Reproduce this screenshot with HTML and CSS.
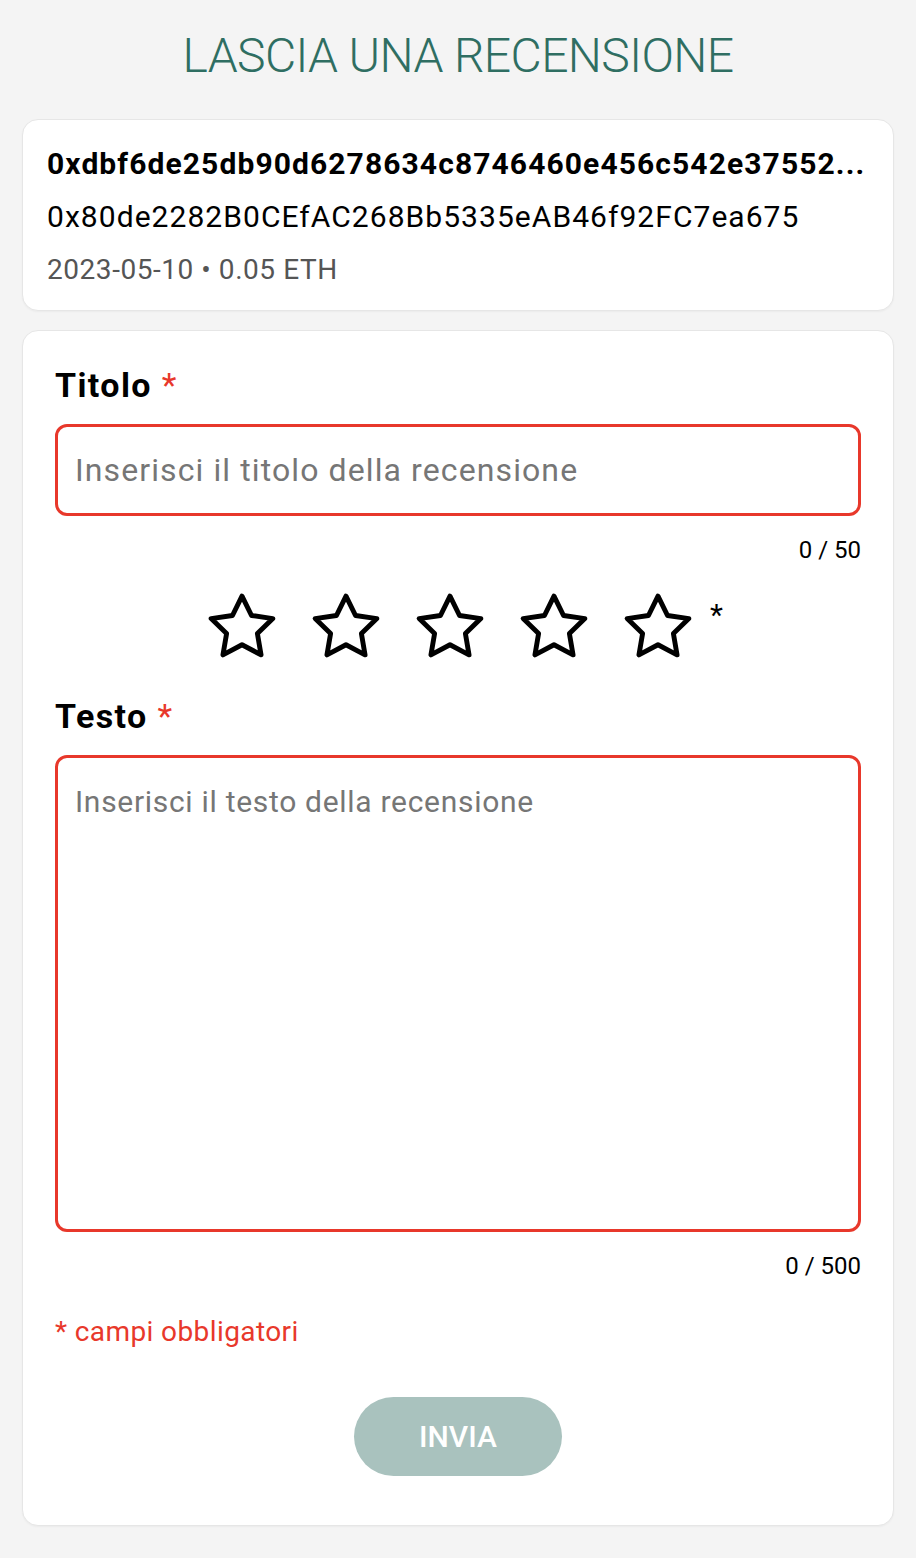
FILE: index.html
```html
<!DOCTYPE html>
<html lang="it">
<head>
<meta charset="utf-8">
<title>Lascia una recensione</title>
<link rel="stylesheet" href="styles.css">
</head>
<body>
<main class="page">
  <h1 class="page-title">LASCIA UNA RECENSIONE</h1>

  <section class="card tx-card">
    <div class="tx-hash">0xdbf6de25db90d6278634c8746460e456c542e37552...</div>
    <div class="tx-address">0x80de2282B0CEfAC268Bb5335eAB46f92FC7ea675</div>
    <div class="tx-meta">2023-05-10 • 0.05 ETH</div>
  </section>

  <form class="card review-card">
    <label class="field-label" for="titolo">Titolo <span class="req">*</span></label>
    <input class="text-input" id="titolo" type="text" placeholder="Inserisci il titolo della recensione">
    <div class="counter">0 / 50</div>

    <div class="stars">
      <svg class="star" viewBox="0 0 24 24"><polygon points="12 2 15.09 8.26 22 9.27 17 14.14 18.18 21.02 12 17.77 5.82 21.02 7 14.14 2 9.27 8.91 8.26 12 2"/></svg>
      <svg class="star" viewBox="0 0 24 24"><polygon points="12 2 15.09 8.26 22 9.27 17 14.14 18.18 21.02 12 17.77 5.82 21.02 7 14.14 2 9.27 8.91 8.26 12 2"/></svg>
      <svg class="star" viewBox="0 0 24 24"><polygon points="12 2 15.09 8.26 22 9.27 17 14.14 18.18 21.02 12 17.77 5.82 21.02 7 14.14 2 9.27 8.91 8.26 12 2"/></svg>
      <svg class="star" viewBox="0 0 24 24"><polygon points="12 2 15.09 8.26 22 9.27 17 14.14 18.18 21.02 12 17.77 5.82 21.02 7 14.14 2 9.27 8.91 8.26 12 2"/></svg>
      <svg class="star" viewBox="0 0 24 24"><polygon points="12 2 15.09 8.26 22 9.27 17 14.14 18.18 21.02 12 17.77 5.82 21.02 7 14.14 2 9.27 8.91 8.26 12 2"/></svg>
      <span class="stars-req">*</span>
    </div>

    <label class="field-label field-label-text" for="testo">Testo <span class="req">*</span></label>
    <textarea class="text-area" id="testo" placeholder="Inserisci il testo della recensione"></textarea>
    <div class="counter">0 / 500</div>

    <p class="required-note">* campi obbligatori</p>

    <div class="actions">
      <button class="submit" type="button" disabled>INVIA</button>
    </div>
  </form>
</main>
</body>
</html>
```

FILE: styles.css
```css
* { box-sizing: border-box; }

html, body {
  margin: 0;
  padding: 0;
  background: #f4f4f4;
  font-family: Roboto, "Liberation Sans", Arial, sans-serif;
  color: #000;
}

.page {
  padding: 28px 22px 30px;
}

.page-title {
  margin: 0 0 35px;
  font-size: 48px;
  line-height: 56px;
  font-weight: 300;
  letter-spacing: -0.6px;
  text-align: center;
  color: #2f6e62;
}

.card {
  background: #fff;
  border: 1px solid #e6e6e6;
  border-radius: 16px;
  box-shadow: 0 1px 2px rgba(0, 0, 0, 0.04);
}

.tx-card {
  padding: 17px 24px 14px;
  margin-bottom: 19px;
}

.tx-hash,
.tx-address,
.tx-meta {
  font-size: 30px;
  line-height: 53px;
  white-space: nowrap;
}

.tx-hash {
  font-weight: 700;
  letter-spacing: 1.1px;
}

.tx-address {
  letter-spacing: 1.05px;
}

.tx-meta {
  font-size: 28px;
  letter-spacing: 0.55px;
  color: #555;
}

.review-card {
  display: flex;
  flex-direction: column;
  padding: 34px 32px 49px;
}

.field-label {
  font-size: 34px;
  line-height: 40px;
  font-weight: 700;
  letter-spacing: 1.4px;
  margin-bottom: 19px;
}

.field-label-text { margin-top: 32px; }

.req {
  color: #e8382b;
  font-weight: 400;
  letter-spacing: 0;
}

.text-input,
.text-area {
  width: 100%;
  border: 3px solid #e8382b;
  border-radius: 12px;
  background: #fff;
  font-family: Roboto, "Liberation Sans", Arial, sans-serif;
  color: #000;
  outline: none;
}

.text-input {
  height: 92px;
  padding: 0 17px;
  font-size: 32px;
  letter-spacing: 1.1px;
}

.text-area {
  height: 477px;
  padding: 26px 17px;
  font-size: 30px;
  line-height: 36px;
  letter-spacing: 0.7px;
  resize: none;
  display: block;
}

.text-input::placeholder,
.text-area::placeholder {
  color: #767676;
}

.counter {
  margin-top: 18px;
  font-size: 24px;
  line-height: 32px;
  text-align: right;
}

.stars {
  display: flex;
  justify-content: center;
  align-items: flex-start;
  gap: 30px;
  margin-top: 24px;
  padding-left: 12px;
}

.star {
  width: 74px;
  height: 74px;
  fill: none;
  stroke: #000;
  stroke-width: 1.6;
  stroke-linejoin: round;
  stroke-linecap: round;
}

.stars-req {
  font-size: 30px;
  line-height: 30px;
  margin-left: -15px;
  margin-top: 10px;
}

.required-note {
  margin: 32px 0 0;
  font-size: 28px;
  line-height: 36px;
  letter-spacing: 0.4px;
  color: #e8382b;
}

.actions {
  display: flex;
  justify-content: center;
  margin-top: 47px;
}

.submit {
  width: 208px;
  height: 79px;
  border: none;
  border-radius: 40px;
  background: #a9c2be;
  color: #fff;
  font-family: Roboto, "Liberation Sans", Arial, sans-serif;
  font-size: 30px;
  font-weight: 500;
}
```
